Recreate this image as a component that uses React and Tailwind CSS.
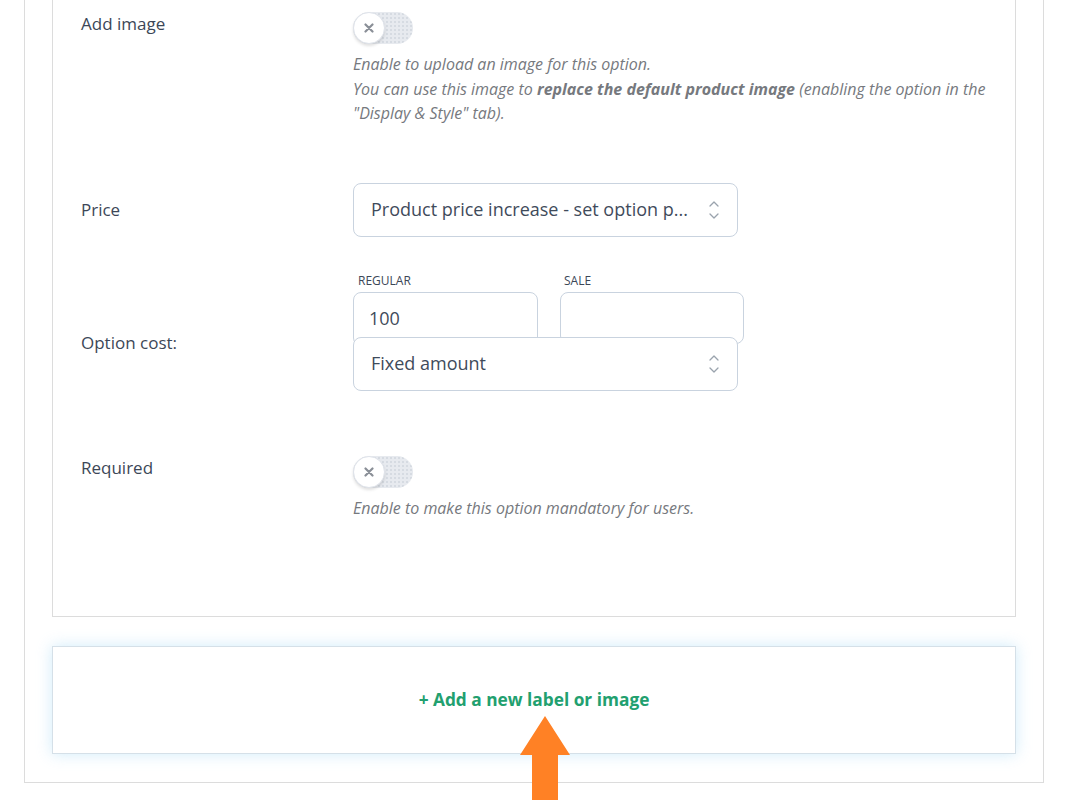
import React from 'react';

const font = { fontFamily: '"Open Sans", "Noto Sans", sans-serif' };

// Small off-toggle with the knob on the left
const Toggle = () => (
  <div className="relative w-[60px] h-[32px] rounded-full bg-[#e7eaef] bg-[radial-gradient(#d6dbe2_1px,transparent_1px)] bg-[length:4px_4px]">
    <div className="absolute left-0 top-0 w-[32px] h-[32px] rounded-full bg-white border border-[#dfe3ea] shadow-[0_2px_3px_rgba(0,0,0,0.12)] flex items-center justify-center">
      <svg width="10" height="10" viewBox="0 0 10 10">
        <path d="M1.5 1.5L8.5 8.5M8.5 1.5L1.5 8.5" stroke="#8a8f97" strokeWidth="2.2" strokeLinecap="round" />
      </svg>
    </div>
  </div>
);

const UpDown = () => (
  <svg width="12" height="22" viewBox="0 0 12 22" fill="none" stroke="#9aa3ad" strokeWidth="1.3" strokeLinecap="round" strokeLinejoin="round">
    <path d="M2 7L6 3L10 7" />
    <path d="M2 15L6 19L10 15" />
  </svg>
);

const Select = ({ children }) => (
  <div className="relative w-[385px] h-[54px] rounded-lg border border-[#c9d3df] bg-white flex items-center justify-between pl-[17px] pr-[17px] text-[18px] text-[#3f4b5b]">
    <span className="truncate">{children}</span>
    <UpDown />
  </div>
);

const Desc = ({ children }) => (
  <p className="mt-2 text-[16px] leading-[24.5px] italic text-[#76797e]">{children}</p>
);

export default function App() {
  return (
    <div className="relative w-[1076px] h-[800px] bg-white overflow-hidden" style={font}>
      <div className="ml-[24px] w-[1020px] border-x border-b border-[#dcdcdc] px-[27px] pb-[28px]">
        {/* option card */}
        <div className="border-x border-b border-[#dcdcdc] pl-[28px] pt-[12px] pb-[96px]">
          <div className="flex">
            <div className="w-[272px] -mt-[1px] text-[17px] text-[#3c4757]">Add image</div>
            <div>
              <Toggle />
              <Desc>
                Enable to upload an image for this option.
                <br />
                You can use this image to <b className="font-bold">replace the default product image</b> (enabling the option in the
                <br />
                "Display &amp; Style" tab).
              </Desc>
            </div>
          </div>

          <div className="flex items-center mt-[57px]">
            <div className="w-[272px] text-[17px] text-[#3c4757]">Price</div>
            <Select>Product price increase - set option p...</Select>
          </div>

          <div className="flex mt-[36px]">
            <div className="w-[272px] pt-[57px] text-[17px] text-[#3c4757]">Option cost:</div>
            <div>
              <div className="flex gap-[22px]">
                <div>
                  <div className="pl-[5px] text-[12px] leading-[16px] text-[#3c4757] uppercase">Regular</div>
                  <div className="mt-[3px] w-[185px] h-[54px] rounded-lg border border-[#c9d3df] pl-[15px] pt-[12px] text-[18px] text-[#3f4b5b]">100</div>
                </div>
                <div>
                  <div className="pl-[4px] text-[12px] leading-[16px] text-[#3c4757] uppercase">Sale</div>
                  <div className="mt-[3px] w-[184px] h-[52px] rounded-lg border border-[#c9d3df]" />
                </div>
              </div>
              <div className="-mt-[9px] relative">
                <Select>Fixed amount</Select>
              </div>
            </div>
          </div>

          <div className="flex mt-[65px]">
            <div className="w-[272px] -mt-[1px] text-[17px] text-[#3c4757]">Required</div>
            <div>
              <Toggle />
              <Desc>Enable to make this option mandatory for users.</Desc>
            </div>
          </div>
        </div>

        {/* add new */}
        <div className="mt-[29px] h-[108px] border border-[#d5e0e8] bg-white shadow-[0_0_14px_rgba(150,210,245,0.45)] flex items-center justify-center">
          <span className="text-[17.3px] font-bold text-[#22a06f]">+ Add a new label or image</span>
        </div>
      </div>

      {/* orange pointer arrow */}
      <svg className="absolute left-[519px] top-[716px]" width="52" height="84" viewBox="0 0 52 84">
        <path d="M26 0L51 39H39V84H13V39H1Z" fill="#ff8125" />
      </svg>
    </div>
  );
}
